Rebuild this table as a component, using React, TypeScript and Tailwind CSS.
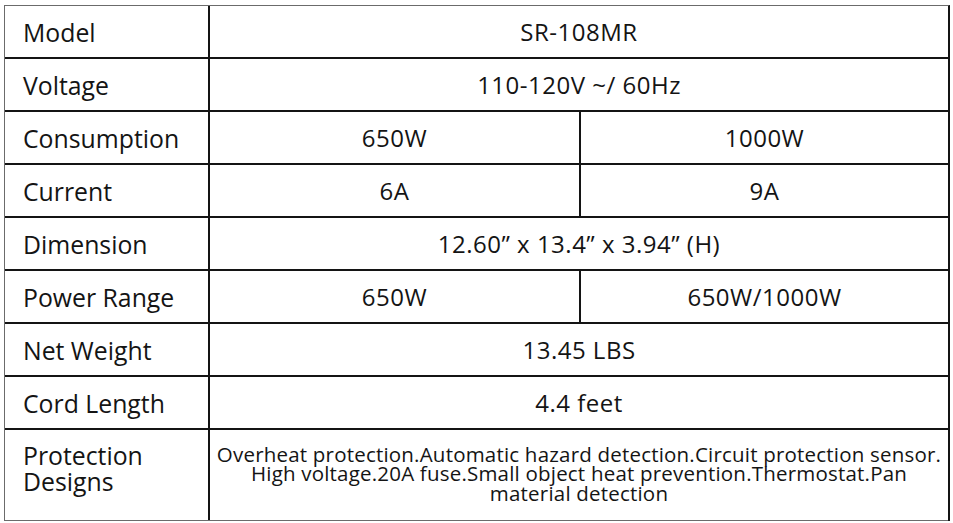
import React from 'react';

type Row = {
  label: string[];
  values: string[];
};

// spec rows, top to bottom
const rows: Row[] = [
  { label: ['Model'], values: ['SR-108MR'] },
  { label: ['Voltage'], values: ['110-120V ~/ 60Hz'] },
  { label: ['Consumption'], values: ['650W', '1000W'] },
  { label: ['Current'], values: ['6A', '9A'] },
  { label: ['Dimension'], values: ['12.60\u201D x 13.4\u201D x 3.94\u201D (H)'] },
  { label: ['Power Range'], values: ['650W', '650W/1000W'] },
  { label: ['Net Weight'], values: ['13.45 LBS'] },
  { label: ['Cord Length'], values: ['4.4 feet'] },
];

const font = { fontFamily: '"Open Sans", "Noto Sans", sans-serif' };

export default function App() {
  return (
    <div className="w-[953px] h-[523px] bg-white pt-[5px] pl-[4px] text-[#141414]" style={font}>
      <div className="w-[946px] border-l border-t border-[#6b6b6b] border-r-2 border-r-[#141414]">
        {rows.map((row) => (
          <div key={row.label[0]} className="flex h-[53px] border-b-2 border-[#141414]">
            <div className="w-[205px] shrink-0 border-r-2 border-[#141414] pl-[18px] flex items-center text-[24.8px] leading-none pt-[1px]">
              {row.label[0]}
            </div>
            {row.values.length === 1 ? (
              <div className="flex-1 flex items-center justify-center text-[24px] tracking-[0.5px] leading-none pt-[1px]">
                {row.values[0]}
              </div>
            ) : (
              <>
                <div className="w-[371px] shrink-0 border-r-2 border-[#141414] flex items-center justify-center text-[24px] tracking-[0.5px] leading-none pt-[1px]">
                  {row.values[0]}
                </div>
                <div className="flex-1 flex items-center justify-center text-[24px] tracking-[0.5px] leading-none pt-[1px]">
                  {row.values[1]}
                </div>
              </>
            )}
          </div>
        ))}

        {/* Protection row */}
        <div className="flex h-[91px] border-b border-[#6b6b6b]">
          <div className="w-[205px] shrink-0 border-r-2 border-[#141414] pl-[18px] pt-[12px] text-[24.8px] leading-[26px]">
            <div>Protection</div>
            <div>Designs</div>
          </div>
          <div className="flex-1 flex flex-col items-center justify-center text-[20.5px] leading-[19.5px] tracking-[0.2px] pb-[2px]">
            <div className="whitespace-nowrap">Overheat protection.Automatic hazard detection.Circuit protection sensor.</div>
            <div className="whitespace-nowrap">High voltage.20A fuse.Small object heat prevention.Thermostat.Pan</div>
            <div className="whitespace-nowrap">material detection</div>
          </div>
        </div>
      </div>
    </div>
  );
}
